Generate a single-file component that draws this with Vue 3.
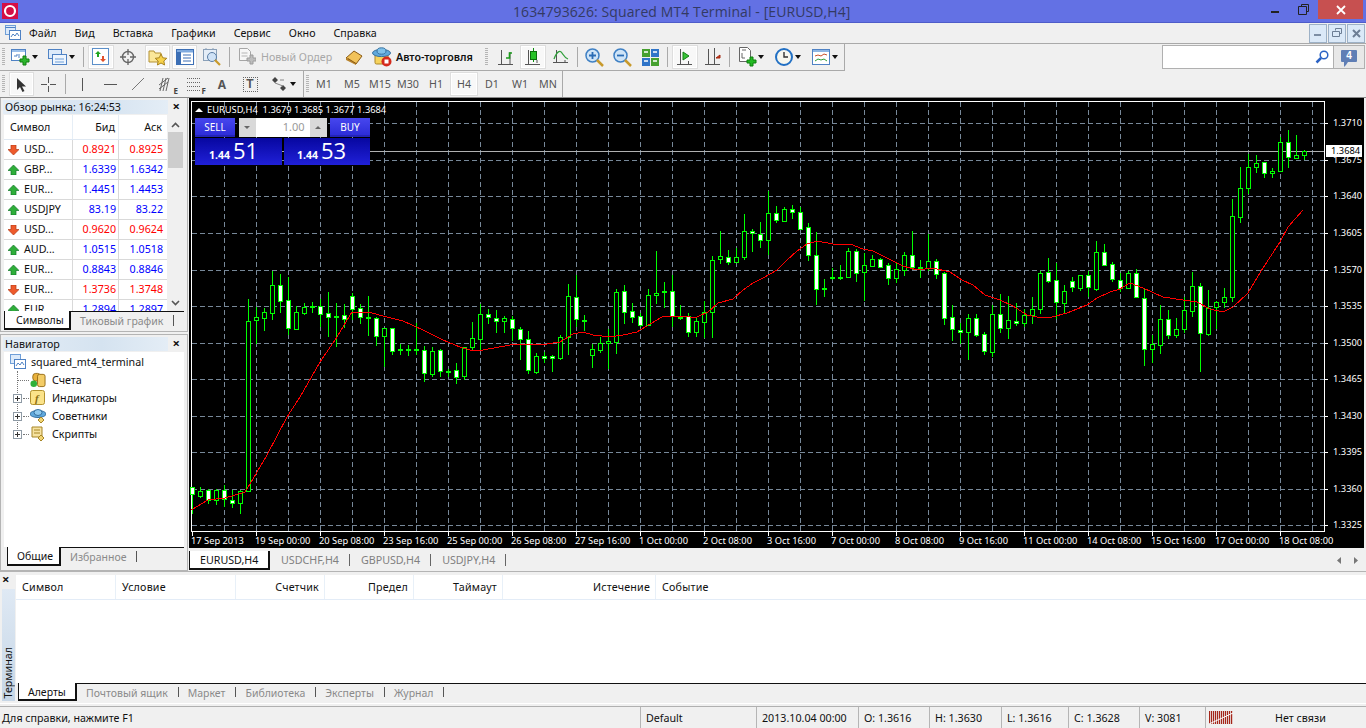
<script setup>
const raw = `487,487,494,513,1|487,491,496,497,0|489,490,500,503,1|489,490,500,504,0|485,490,499,506,1|490,500,503,507,1|490,491,503,513,0|299,321,491,491,0|307,317,320,343,0|308,312,318,330,0|271,285,313,319,0|274,285,301,312,1|277,300,328,334,1|306,312,329,329,0|303,307,313,314,0|302,306,307,312,1|299,306,314,326,1|292,313,317,336,1|303,316,317,346,1|304,315,319,327,1|293,296,309,319,1|304,308,317,323,1|296,317,318,335,1|317,318,336,345,1|328,328,336,366,0|328,328,351,354,1|344,349,350,354,1|345,349,350,355,1|323,349,350,354,1|346,350,373,381,1|347,351,374,376,0|349,350,371,376,1|369,371,372,376,1|363,370,377,383,1|347,347,376,379,0|322,338,347,350,0|304,314,339,350,0|309,314,317,323,1|310,318,321,332,1|316,318,321,332,0|316,319,328,340,1|327,329,339,359,1|331,339,370,373,1|353,356,372,373,0|352,356,358,362,1|355,356,358,371,1|335,337,358,359,0|284,296,337,354,0|275,297,319,326,1|315,320,321,330,1|344,349,355,367,0|337,343,350,352,0|329,341,343,368,0|289,292,342,353,0|285,291,312,323,1|303,311,317,322,1|313,316,325,326,1|289,295,325,325,0|251,293,295,303,0|282,291,292,307,1|275,291,316,326,1|305,317,318,319,1|313,316,332,336,1|318,321,332,336,0|301,312,322,337,0|256,260,312,337,0|231,256,259,263,0|250,257,262,264,1|248,257,262,262,0|214,231,257,259,0|229,231,233,251,1|222,234,240,247,1|191,213,240,254,0|206,213,220,222,1|207,209,221,221,0|205,209,212,218,1|207,212,229,229,1|223,227,255,260,1|232,255,289,304,1|279,288,289,296,1|268,277,278,279,1|265,277,278,279,1|248,251,277,277,0|249,251,273,281,1|253,265,272,300,0|255,259,266,266,0|258,259,267,267,1|263,265,278,284,1|263,269,278,282,0|252,255,270,275,0|231,255,267,269,1|260,267,268,277,1|234,261,268,270,0|259,261,274,278,1|272,273,318,324,1|305,317,329,340,1|323,330,332,343,1|314,318,332,359,0|314,318,335,336,1|332,334,351,354,1|305,314,352,356,0|294,314,328,332,1|296,320,328,338,0|303,321,323,325,1|309,315,323,326,0|297,309,315,323,0|271,273,309,313,0|258,272,281,282,1|263,280,302,318,1|285,291,303,313,0|277,281,287,291,1|275,275,288,290,0|271,275,287,296,1|241,252,289,290,0|244,252,265,265,1|262,264,279,281,1|273,280,288,291,1|271,273,288,288,0|269,273,297,297,1|289,298,349,365,1|335,344,349,362,0|305,319,345,353,0|310,319,335,338,1|318,329,335,337,0|297,310,329,332,0|272,286,311,316,0|283,286,333,371,1|290,308,334,335,0|301,302,307,328,0|288,297,302,307,0|199,216,297,301,0|167,188,217,222,0|154,167,188,193,0|155,163,167,172,0|162,162,173,177,1|168,171,173,177,0|137,142,171,171,0|130,142,157,167,1|135,155,158,158,0|150,151,155,159,0`
const candles = raw.split('|').map((r, i) => {
  const [hi, top, bot, lo, w] = r.split(',').map(Number)
  return { x: 192 + 8 * i, hi, top, bot, lo, w }
})
const maPoints = `191,510 208,500 225,498 245,492 250,484 267,455 287,417 300,397 320,362 337,337 352,312 368,312 387,317 403,321 423,330 443,340 460,347 470,350 483,350 510,345 527,344 547,344 560,342 573,334 583,332 593,335 610,337 623,335 637,332 650,324 662,317 677,316 690,317 697,317 708,312 718,303 733,299 743,290 753,283 763,278 777,270 787,260 797,251 807,244 817,241 833,244 850,244 863,249 873,251 887,258 903,266 917,270 933,268 950,272 962,280 973,285 985,295 1000,300 1013,306 1027,315 1037,317 1052,317 1067,313 1087,305 1097,298 1110,292 1120,289 1130,283 1143,288 1163,297 1183,300 1197,302 1210,309 1223,312 1233,307 1248,293 1263,268 1280,242 1288,227 1303,210`
const hLines = [123, 160, 196, 233, 270, 306, 343, 379, 416, 452, 489, 525]
const vLines = Array.from({ length: 35 }, (_, i) => 224 + 32 * i)
const prices = ['1.3710', '1.3675', '1.3640', '1.3605', '1.3570', '1.3535', '1.3500', '1.3465', '1.3430', '1.3395', '1.3360', '1.3325']
const times = ['17 Sep 2013', '19 Sep 00:00', '20 Sep 08:00', '23 Sep 16:00', '25 Sep 00:00', '26 Sep 08:00', '27 Sep 16:00', '1 Oct 00:00', '2 Oct 08:00', '3 Oct 16:00', '7 Oct 00:00', '8 Oct 08:00', '9 Oct 16:00', '11 Oct 00:00', '14 Oct 08:00', '15 Oct 16:00', '17 Oct 00:00', '18 Oct 08:00']
const menu = ['Файл', 'Вид', 'Вставка', 'Графики', 'Сервис', 'Окно', 'Справка']
const periods = ['M1', 'M5', 'M15', 'M30', 'H1', 'H4', 'D1', 'W1', 'MN']
const quotes = [
  ['USD...', '0.8921', '0.8925', 0], ['GBP...', '1.6339', '1.6342', 1], ['EUR...', '1.4451', '1.4453', 1],
  ['USDJPY', '83.19', '83.22', 1], ['USD...', '0.9620', '0.9624', 0], ['AUD...', '1.0515', '1.0518', 1],
  ['EUR...', '0.8843', '0.8846', 1], ['EUR...', '1.3736', '1.3748', 0], ['EUR...', '1.2894', '1.2897', 1]
]
const chartTabs = ['USDCHF,H4', 'GBPUSD,H4', 'USDJPY,H4']
const termTabs = ['Почтовый ящик', 'Маркет', 'Библиотека', 'Эксперты', 'Журнал']
const statusCells = [
  { t: '2013.10.04 00:00', w: 102 }, { t: 'O: 1.3616', w: 71 }, { t: 'H: 1.3630', w: 72 },
  { t: 'L: 1.3616', w: 67 }, { t: 'C: 1.3628', w: 71 }, { t: 'V: 3081', w: 66 }
]
const barsX = Array.from({ length: 12 }, (_, i) => i * 2)
</script>

<template>
  <div class="app">
    <header class="title">
      <svg class="logo" width="16" height="16" viewBox="0 0 16 16"><rect width="16" height="16" fill="#d40f45"/><circle cx="8" cy="8" r="5" fill="none" stroke="#fff" stroke-width="2.2"/></svg>
      <span class="title-text">1634793626: Squared MT4 Terminal - [EURUSD,H4]</span>
      <div class="win">
        <svg class="wmin" width="10" height="3"><rect width="8" height="2" y="1" fill="#222"/></svg>
        <svg class="wmax" width="11" height="11"><path d="M3.5 2.5V.5h7v7h-2M.5 2.5h8v8h-8z" fill="none" stroke="#222"/></svg>
        <div class="wclose"><svg width="10" height="10"><path d="M1 1l8 8M9 1l-8 8" stroke="#fff" stroke-width="1.8"/></svg></div>
      </div>
    </header>

    <nav class="menubar">
      <svg class="mdi-ico" width="16" height="16" viewBox="0 0 16 16"><rect x=".5" y=".5" width="10" height="9" fill="#dceafa" stroke="#6f9fd8"/><rect x="4.5" y="5.5" width="11" height="9" fill="#fff" stroke="#4f82c4"/><path d="M6 12l2-3 2 2 2-3 2 3" fill="none" stroke="#4f82c4"/><path d="M.5 2.5h10" stroke="#4f82c4"/></svg>
      <span v-for="m in menu" :key="m" class="menu-item">{{ m }}</span>
      <div class="mdi-btns">
        <span class="mdi-btn"><svg width="8" height="8"><rect y="5" width="7" height="2" fill="#7d8ea5"/></svg></span>
        <span class="mdi-btn"><svg width="10" height="10"><path d="M3.5 2.5V.5h6v5h-2M.5 3.5h7v5h-7z" fill="none" stroke="#6d7e95" stroke-width="1"/></svg></span>
        <span class="mdi-btn"><svg width="9" height="9"><path d="M1 1l7 7M8 1l-7 7" stroke="#6d7e95" stroke-width="2"/></svg></span>
      </div>
    </nav>

    <div class="row1">
      <div class="toolbar tb1">
        <i class="grip"></i>
        <span class="tbtn w-m">
          <svg width="20" height="18" viewBox="0 0 20 18"><rect x=".5" y="1.5" width="14" height="11" fill="#fff" stroke="#4f82c4"/><rect x="1" y="2" width="13" height="2" fill="#9cc0ea"/><path d="M3 8h3v-2M8 10V6" stroke="#4f82c4" fill="none"/><path d="M10 8h3v-3h3v3h3v3h-3v3h-3v-3h-3z" transform="translate(-1 3)" fill="#2cb52c" stroke="#0e7f0e"/></svg>
          <i class="caret"></i>
        </span>
        <span class="tbtn w-m">
          <svg width="20" height="18" viewBox="0 0 20 18"><rect x=".5" y="1.5" width="13" height="9" fill="#dceafa" stroke="#4f82c4"/><rect x="4.5" y="6.5" width="14" height="10" fill="#eef5fd" stroke="#4f82c4"/><path d="M7 11h9M7 14h9" stroke="#6f9fd8"/></svg>
          <i class="caret"></i>
        </span>
        <i class="sep s-b"></i>
        <span class="tbtn on w-26">
          <svg width="18" height="18" viewBox="0 0 18 18"><rect x=".5" y=".5" width="16" height="16" fill="#fff" stroke="#5b8fc9"/><path d="M3 6l3-3 3 3H7v3H5V6z" fill="#1fa51f"/><path d="M8 11l3 3 3-3h-2V8h-2v3z" fill="#e1502a"/></svg>
        </span>
        <span class="tbtn w-28">
          <svg width="18" height="18" viewBox="0 0 18 18"><circle cx="9" cy="9" r="5.5" fill="none" stroke="#666" stroke-width="1.4"/><path d="M9 1v6M9 11v6M1 9h6M11 9h6" stroke="#666" stroke-width="1.3"/></svg>
        </span>
        <span class="tbtn on w-25 ml3">
          <svg width="20" height="18" viewBox="0 0 20 18"><path d="M1 3h5l1 2h6v9H1z" fill="#fbe79a" stroke="#b39133"/><path d="M13 6l1.8 3.8 4 .5-3 2.7.8 4-3.6-2-3.6 2 .8-4-3-2.7 4-.5z" fill="#f7d24b" stroke="#a98420"/></svg>
        </span>
        <span class="tbtn on w-25 ml2">
          <svg width="18" height="17" viewBox="0 0 18 17"><rect x=".5" y=".5" width="17" height="15" fill="#fff" stroke="#3c6fb5"/><rect x="1" y="1" width="16" height="2.5" fill="#7faadf"/><rect x="1" y="3" width="4" height="12" fill="#3c6fb5"/><path d="M7 6h8M7 9h8M7 12h8" stroke="#3c6fb5"/></svg>
        </span>
        <span class="tbtn w-28 ml1">
          <svg width="19" height="19" viewBox="0 0 19 19"><rect x=".5" y="1.5" width="13" height="11" fill="#e4edf7" stroke="#8aa0b8"/><path d="M3 1V0M10 1V0" stroke="#8aa0b8"/><circle cx="9" cy="9" r="4.5" fill="#cfe2f6" stroke="#5a7ea6"/><path d="M12 12l5 5" stroke="#c89a2c" stroke-width="2.2"/></svg>
        </span>
        <i class="sep"></i>
        <span class="tbtn w-28">
          <svg width="17" height="18" viewBox="0 0 17 18"><path d="M.5 .5h8l3 3v9h-11z" fill="#f7f7f7" stroke="#a6a6a6"/><path d="M2.5 5h6M2.5 8h6" stroke="#b5b5b5"/><path d="M8 10h3V7h3v3h3v3h-3v3h-3v-3H8z" fill="#bdbdbd" stroke="#9c9c9c"/></svg>
        </span>
        <span class="label gray">Новый Ордер</span>
        <span class="tbtn w-28">
          <svg width="18" height="15" viewBox="0 0 18 15"><path d="M1 8l8-7 8 5-6 8z" fill="#f1c25a" stroke="#8a5a14"/><path d="M3 8.5l8 5" stroke="#8a5a14"/><path d="M1 8l10 6v1L1 10z" fill="#b9832a"/></svg>
        </span>
        <span class="tbtn w-28">
          <svg width="20" height="20" viewBox="0 0 20 20"><rect x="3" y="7" width="13" height="10" rx="1.5" fill="#f6d35d" stroke="#a9852a"/><ellipse cx="9.5" cy="6" rx="9" ry="3.6" fill="#5fa9dd" stroke="#37719f"/><ellipse cx="9.5" cy="4" rx="4.5" ry="3.2" fill="#7ec0ea" stroke="#37719f"/><circle cx="14.5" cy="14.5" r="5" fill="#d42a1c"/><rect x="12.5" y="12.5" width="4" height="4" fill="#fff"/></svg>
        </span>
        <span class="label bold">Авто-торговля</span>
      </div>
      <div class="toolbar tb1b">
        <i class="grip"></i>
        <span class="tbtn w-28">
          <svg width="16" height="19" viewBox="0 0 16 19"><path d="M3.500 2v14M0 16.500h15M12 4v12" stroke="#555" fill="none"/><path d="M8 10h3.500V5H14" stroke="#1a9a1a" stroke-width="1.600" fill="none"/></svg>
        </span>
        <span class="tbtn on w-26">
          <svg width="16" height="19" viewBox="0 0 16 19"><path d="M3.500 2v14M0 16.500h15M12 12v3" stroke="#555" fill="none"/><path d="M8.500 0v14" stroke="#0d8f0d"/><rect x="5.500" y="3.500" width="6" height="8" fill="#26c226" stroke="#0b6f0b"/></svg>
        </span>
        <span class="tbtn w-29">
          <svg width="16" height="18" viewBox="0 0 16 18"><path d="M3.500 2v12M0 14.500h15M12 12v2" stroke="#555" fill="none"/><path d="M1 11C4 3 7 2 9 5s3 5 6 6" stroke="#2f9f3a" stroke-width="1.300" fill="none"/></svg>
        </span>
        <i class="sep s-c"></i>
        <span class="tbtn w-28">
          <svg width="19" height="19" viewBox="0 0 19 19"><circle cx="7.500" cy="7.500" r="6.500" fill="#cfe4f7" stroke="#3f80c4" stroke-width="1.500"/><path d="M4 7.500h7M7.500 4v7" stroke="#2a6cb5" stroke-width="1.800"/><path d="M12 12l6 6" stroke="#c89a2c" stroke-width="2.500"/></svg>
        </span>
        <span class="tbtn w-28">
          <svg width="19" height="19" viewBox="0 0 19 19"><circle cx="7.500" cy="7.500" r="6.500" fill="#cfe4f7" stroke="#3f80c4" stroke-width="1.500"/><path d="M4 7.500h7" stroke="#2a6cb5" stroke-width="1.800"/><path d="M12 12l6 6" stroke="#c89a2c" stroke-width="2.500"/></svg>
        </span>
        <span class="tbtn w-28">
          <svg width="17" height="17" viewBox="0 0 17 17"><rect width="8" height="8" fill="#46a02f"/><rect x="9" width="8" height="8" fill="#2f74c8"/><rect y="9" width="8" height="8" fill="#2f74c8"/><rect x="9" y="9" width="8" height="8" fill="#46a02f"/><path d="M2 3h4M11 3h4M2 12h4M11 12h4" stroke="#fff" stroke-width="1.500"/></svg>
        </span>
        <i class="sep s-d"></i>
        <span class="tbtn on w-26">
          <svg width="16" height="19" viewBox="0 0 16 19"><path d="M3.500 1v15M0 16.500h15M11.500 13v3" stroke="#555" fill="none"/><path d="M6 4v8l6-4z" fill="#36c236" stroke="#128212"/></svg>
        </span>
        <span class="tbtn w-29">
          <svg width="16" height="19" viewBox="0 0 16 19"><path d="M3.500 1v15M0 16.500h15M9.500 0v16" stroke="#555" fill="none"/><path d="M15 7l-4 3 4 0z" fill="#c9381c" stroke="#a32a12"/></svg>
        </span>
        <i class="sep s-e"></i>
        <span class="tbtn w-m2">
          <svg width="18" height="20" viewBox="0 0 18 20"><path d="M.5 .5h8l3 3v11h-11z" fill="#fff" stroke="#666"/><path d="M3 6v5h3M3 3h4" stroke="#666" fill="none"/><path d="M8 10h3V7h3v3h3v3h-3v3h-3v-3H8z" transform="translate(0 3)" fill="#22b922" stroke="#0c7f0c"/></svg>
          <i class="caret"></i>
        </span>
        <span class="tbtn w-m3">
          <svg width="18" height="18" viewBox="0 0 18 18"><circle cx="9" cy="9" r="8" fill="#f7f7ef" stroke="#2270c4" stroke-width="2"/><path d="M9 4v5h4" stroke="#333" stroke-width="1.400" fill="none"/></svg>
          <i class="caret"></i>
        </span>
        <span class="tbtn w-m3">
          <svg width="18" height="16" viewBox="0 0 18 16"><rect x=".5" y=".5" width="17" height="15" fill="#fff" stroke="#4f82c4"/><rect x="1" y="1" width="16" height="2" fill="#8db6e4"/><path d="M3 7l3-1 3 1 3-2 3 1" stroke="#c9512a" fill="none"/><path d="M3 12l3-2 3 1 3-1 3 2" stroke="#2f9f3a" fill="none"/></svg>
          <i class="caret"></i>
        </span>
      </div>
      <div class="search">
        <div class="search-box">
          <svg width="14" height="14" viewBox="0 0 14 14"><circle cx="9" cy="5" r="3.800" fill="#fff" stroke="#2b62c4" stroke-width="1.500"/><path d="M6 8l-4.500 4.500" stroke="#2b62c4" stroke-width="2.500"/></svg>
        </div>
        <div class="notice"><span class="bubble">4</span></div>
      </div>
    </div>

    <div class="row2">
      <div class="toolbar tb2">
        <i class="grip"></i>
        <span class="tbtn on w-25">
          <svg width="11" height="15" viewBox="0 0 11 15"><path d="M1 1v12l3-3 2.500 5 2-1-2.500-4.500h4z" fill="#333"/></svg>
        </span>
        <span class="tbtn w-28">
          <svg width="17" height="17" viewBox="0 0 17 17"><path d="M8.500 1v6M8.500 10v6M1 8.500h6M10 8.500h6" stroke="#555"/></svg>
        </span>
        <i class="sep s-f"></i>
        <span class="tbtn w-28"><svg width="3" height="13"><path d="M1.500 0v13" stroke="#555"/></svg></span>
        <span class="tbtn w-28"><svg width="13" height="3"><path d="M0 1.500h13" stroke="#555"/></svg></span>
        <span class="tbtn w-28"><svg width="14" height="14"><path d="M1 13L13 1" stroke="#777"/></svg></span>
        <span class="tbtn w-28">
          <svg width="14" height="15" viewBox="0 0 14 15"><path d="M0 8L9 1M0 12l9-7M4 1L1 14M7 1L4 14M10 1L7 14" stroke="#666" fill="none"/></svg><b class="sub">E</b>
        </span>
        <span class="tbtn w-28">
          <svg width="14" height="14" viewBox="0 0 14 14"><path d="M0 1.500h14M0 5.500h14M0 9.500h14M0 13.500h14" stroke="#666" stroke-dasharray="1 1"/></svg><b class="sub">F</b>
        </span>
        <span class="tbtn w-28 ta">A</span>
        <span class="tbtn w-28"><span class="tt">T</span></span>
        <span class="tbtn w-m4">
          <svg width="15" height="14" viewBox="0 0 15 14"><path d="M3 0l3 3-3 3-3-3zM11 8l3 3-3 3-3-3z" fill="#444"/><path d="M3 6l8 3M8 3h4" stroke="#888"/></svg>
          <i class="caret"></i>
        </span>
      </div>
      <div class="toolbar tb2b">
        <i class="grip"></i>
        <span v-for="p in periods" :key="p" class="period" :class="{ active: p === 'H4' }">{{ p }}</span>
      </div>
    </div>

    <div class="main">
      <aside class="side">
        <section class="panel market">
          <div class="phead"><span>Обзор рынка: 16:24:53</span><span class="x">×</span></div>
          <div class="mbody">
            <div class="mtable">
              <div class="mrow mh">
                <span class="c1">Символ</span><span class="c2">Бид</span><span class="c3">Аск</span>
              </div>
              <div v-for="(q, i) in quotes" :key="i" class="mrow" :class="q[3] ? 'up' : 'down'">
                <span class="c1">
                  <svg width="11" height="10" viewBox="0 0 11 10">
                    <path v-if="q[3]" d="M5.500 0L11 5.500H8V10H3V5.500H0z" fill="#2fae3a" stroke="#13772a" stroke-width=".7"/>
                    <path v-else d="M5.500 10L11 4.500H8V0H3v4.500H0z" fill="#ee5a2c" stroke="#b13a15" stroke-width=".7"/>
                  </svg>
                  <em>{{ q[0] }}</em>
                </span>
                <span class="c2">{{ q[1] }}</span>
                <span class="c3">{{ q[2] }}</span>
              </div>
            </div>
            <div class="scroll">
              <svg width="9" height="6"><path d="M1 5l3.500-3.500L8 5" fill="none" stroke="#555" stroke-width="1.600"/></svg>
              <i class="thumb"></i>
              <svg class="sdown" width="9" height="6"><path d="M1 1l3.500 3.500L8 1" fill="none" stroke="#555" stroke-width="1.600"/></svg>
            </div>
          </div>
          <div class="tabs mtabs">
            <span class="tab active">Символы</span>
            <span class="tab">Тиковый график</span>
          </div>
        </section>

        <section class="panel nav">
          <div class="phead"><span>Навигатор</span><span class="x">×</span></div>
          <div class="tree">
            <i class="vdots"></i>
            <div class="node root">
              <svg width="16" height="16" viewBox="0 0 16 16"><rect x=".5" y=".5" width="10" height="9" fill="#dceafa" stroke="#6f9fd8"/><rect x="4.500" y="5.500" width="11" height="9" fill="#fff" stroke="#4f82c4"/><path d="M6 12l2-3 2 2 2-3 2 3" fill="none" stroke="#4f82c4"/></svg>
              <span>squared_mt4_terminal</span>
            </div>
            <div class="node"><i class="hd"></i>
              <svg width="16" height="16" viewBox="0 0 17 16"><rect x="3" y="1" width="8" height="8" rx="3" fill="#e9b13c" stroke="#966d18"/><rect x="8" y="2" width="8" height="13" rx="2" fill="#f3cc66" stroke="#966d18"/><circle cx="4" cy="12" r="3.500" fill="#2fb03a"/></svg>
              <span>Счета</span>
            </div>
            <div class="node"><i class="plus"></i><i class="hd short"></i>
              <svg width="16" height="16" viewBox="0 0 16 16"><rect x=".5" y=".5" width="14" height="14" rx="2" fill="#fbe38a" stroke="#b3922f"/><text x="5" y="12" class="fx">f</text></svg>
              <span>Индикаторы</span>
            </div>
            <div class="node"><i class="plus"></i><i class="hd short"></i>
              <svg width="16" height="16" viewBox="0 0 16 16"><ellipse cx="8" cy="6" rx="8" ry="3.500" fill="#5fa9dd" stroke="#37719f"/><ellipse cx="8" cy="4.500" rx="4" ry="3" fill="#8fcaee" stroke="#37719f"/><path d="M11 9l3 3-3 3-3-3z" fill="#f1d473" stroke="#a68526"/></svg>
              <span>Советники</span>
            </div>
            <div class="node"><i class="plus"></i><i class="hd short"></i>
              <svg width="16" height="16" viewBox="0 0 16 16"><path d="M2 1h10v10H2z" fill="#f6e2a0" stroke="#a68526"/><path d="M4 4h6M4 7h6" stroke="#a68526"/><path d="M11 9l3 3-3 3-3-3z" fill="#f1d473" stroke="#a68526"/></svg>
              <span>Скрипты</span>
            </div>
          </div>
          <div class="tabs ntabs">
            <span class="tab active">Общие</span>
            <span class="tab">Избранное</span>
          </div>
        </section>
      </aside>

      <div class="chartcol">
        <div class="chart">
          <svg class="plot" width="1175" height="450" viewBox="189 98 1175 450">
            <g shape-rendering="crispEdges">
              <rect x="189" y="98" width="1175" height="450" fill="#000"/>
              <path d="M191.500 101.500H1324.500V531.500H191.500Z" fill="none" stroke="#fff"/>
              <g stroke="#778899" stroke-dasharray="5 3">
                <path v-for="y in hLines" :key="y" :d="`M192 ${y + .5}H1324`"/>
                <path v-for="x in vLines" :key="x" :d="`M${x + .5} 102V531`"/>
              </g>
              <path d="M192 151.500H1324" stroke="#b0b0b0"/>
              <g>
                <g v-for="c in candles" :key="c.x">
                  <path :d="`M${c.x + .5} ${c.hi}V${c.lo + 1}`" stroke="#00ff00"/>
                  <rect :x="c.x - 1.500" :y="c.top + .5" width="4" :height="c.bot - c.top" :fill="c.w ? '#fff' : '#000'" stroke="#00ff00"/>
                </g>
              </g>
              <polyline :points="maPoints" fill="none" stroke="#ff0000"/>
              <path v-for="y in hLines" :key="'p' + y" :d="`M1325 ${y + .5}h3`" stroke="#fff"/>
              <path v-for="(t, i) in times" :key="'t' + i" :d="`M${192.5 + i * 64} 532v4`" stroke="#fff"/>
              <rect x="1326" y="145" width="36" height="12" fill="#fff"/>
            </g>
            <g class="axis">
              <text v-for="(p, i) in prices" :key="p" x="1333" :y="hLines[i] + 3">{{ p }}</text>
              <text v-for="(t, i) in times" :key="t" :x="191 + i * 64" y="544">{{ t }}</text>
              <text x="1331" y="154" class="cur-p">1.3684</text>
              <text x="207" y="113">EURUSD,H4&nbsp;&nbsp;1.3679 1.3685 1.3677 1.3684</text>
            </g>
            <path d="M195 112l4-4 4 4z" fill="#fff"/>
          </svg>
          <div class="trade">
            <div class="trade-top">
              <span class="tbutton">SELL</span>
              <div class="lot">
                <span class="spin"><i class="dn"></i></span>
                <span class="lotv">1.00</span>
                <span class="spin"><i class="upw"></i></span>
              </div>
              <span class="tbutton">BUY</span>
            </div>
            <div class="trade-bot">
              <div class="pbox"><b>1.44</b><span>51</span></div>
              <div class="pbox r"><b>1.44</b><span>53</span></div>
            </div>
          </div>
        </div>
        <div class="ctabs">
          <span class="ctab active">EURUSD,H4</span>
          <span v-for="t in chartTabs" :key="t" class="ctab">{{ t }}</span>
          <span class="ctab-arrows">
            <svg width="5" height="7"><path d="M4 0v7L0 3.500z" fill="#777"/></svg>
            <svg width="5" height="7"><path d="M1 0v7l4-3.500z" fill="#777"/></svg>
          </span>
        </div>
      </div>
    </div>

    <section class="terminal">
      <div class="strip"><span class="x">×</span><div class="vbar"><span>Терминал</span></div></div>
      <div class="tbody">
        <div class="thead">
          <span class="th t1">Символ</span>
          <span class="th t2">Условие</span>
          <span class="th t3">Счетчик</span>
          <span class="th t4">Предел</span>
          <span class="th t5">Таймаут</span>
          <span class="th t6">Истечение</span>
          <span class="th t7">Событие</span>
        </div>
        <div class="tblank"></div>
        <div class="tabs ttabs">
          <span class="tab active">Алерты</span>
          <span v-for="t in termTabs" :key="t" class="tab">{{ t }}</span>
        </div>
      </div>
    </section>

    <footer class="status">
      <span class="s-help">Для справки, нажмите F1</span>
      <span class="s-cell s-def">Default</span>
      <span v-for="s in statusCells" :key="s.t" class="s-cell" :style="{ width: s.w + 'px' }">{{ s.t }}</span>
      <span class="s-bars">
        <svg width="24" height="13"><rect v-for="x in barsX" :key="x" :x="x" y="0" width="1.200" height="13" fill="#a4261a"/><path d="M0 13L24 2" stroke="#fff" stroke-width="1"/></svg>
      </span>
      <span class="s-net">Нет связи</span>
    </footer>
  </div>
</template>

<style>
html, body { margin: 0; overflow: hidden; background: #f0f0f0; }
</style>

<style scoped>
.app {
  width: 1366px; height: 728px; display: flex; flex-direction: column; overflow: hidden;
  background: #f0f0f0; color: #111; font: 10.7px "Noto Sans", "DejaVu Sans", sans-serif;
}
i, em, b { font-style: normal; }
.title {
  height: 22px; flex: none; background: #6371e4; border-bottom: 1px solid #4e5cc9;
  display: flex; align-items: flex-start; position: relative;
}
.logo { margin: 3px 0 0 2px; }
.title-text {
  position: absolute; left: 513px; top: 1px; color: #333a63; letter-spacing: .1px;
  font: 14px/21px "Open Sans", sans-serif; white-space: nowrap;
}
.win { margin-left: auto; display: flex; align-items: flex-start; }
.wmin { margin: 10px 17px 0 0; }
.wmax { margin: 4px 9px 0 0; }
.wclose { width: 45px; height: 19px; background: #c75050; display: flex; align-items: center; justify-content: center; margin-right: 3px; }
.menubar { height: 20px; flex: none; display: flex; align-items: center; border-bottom: 1px solid #a9a9a9; }
.mdi-ico { margin: 0 8px 0 5px; }
.menu-item { margin-right: 18px; }
.mdi-btns { margin-left: auto; display: flex; gap: 1px; margin-right: 1px; }
.mdi-btn {
  width: 16px; height: 17px; border: 1px solid #9db1c6; background: #dbe9f8;
  display: flex; align-items: center; justify-content: center;
}
.row1 { height: 27px; flex: none; display: flex; }
.row2 { height: 27px; flex: none; display: flex; border-bottom: 1px solid #8a8a8a; box-sizing: border-box; }
.toolbar { display: flex; align-items: center; height: 100%; box-sizing: border-box; }
.tb1 { width: 483px; border-bottom: 1px solid #a9a9a9; }
.tb1b { border-right: 1px solid #a9a9a9; border-bottom: 1px solid #a9a9a9; width: 362px; }
.tb2 { width: 304px; border-right: 1px solid #a9a9a9; }
.tb2b { width: 259px; border-right: 1px solid #a9a9a9; }
.tb2b .grip { margin-right: 1px; }
.grip {
  width: 3px; height: 18px; margin: 0 4px 0 2px; flex: none;
  background: repeating-linear-gradient(#b5b5b5 0 1px, transparent 1px 2px);
}
.tbtn { height: 24px; display: flex; align-items: center; justify-content: center; box-sizing: border-box; flex: none; position: relative; }
.w-25 { width: 25px; }
.w-26 { width: 26px; }
.w-28 { width: 28px; }
.w-29 { width: 29px; }
.ml1 { margin-left: 1px; }
.ml2 { margin-left: 2px; }
.ml3 { margin-left: 3px; }
.w-m { width: 37px; justify-content: flex-start; padding-left: 2px; gap: 1px; }
.w-m2 { width: 37px; justify-content: flex-start; padding-left: 6px; gap: 1px; }
.w-m3 { width: 37px; justify-content: flex-start; padding-left: 5px; gap: 2px; }
.w-m4 { width: 39px; justify-content: flex-start; padding-left: 8px; gap: 3px; }
.on { background: #f8f8f8; border: 1px solid #dedede; box-shadow: inset 0 0 0 1px #fff; }
.caret { width: 0; height: 0; border: 3px solid transparent; border-top: 4px solid #111; border-bottom: 0; }
.sep { width: 1px; height: 20px; background: #aaa; margin: 0 3px; flex: none; }
.s-b { margin: 0 4px 0 0; }
.s-c { margin: 0 2px; }
.s-d { margin: 0 4px 0 3px; }
.s-e { margin: 0 3px 0 2px; }
.s-f { margin: 0 2px 0 3px; }
.label { white-space: nowrap; }
.gray { color: #a8a8a8; width: 79px; flex: none; }
.bold { font-weight: 600; color: #111; }
.sub { position: absolute; right: 2px; bottom: 1px; font-size: 8px; color: #444; line-height: 9px; }
.ta { color: #555; font-weight: 700; font-size: 12px; }
.tt { border: 1px dotted #666; width: 13px; height: 13px; text-align: center; font: 700 12px/13px "Liberation Sans", sans-serif; color: #555; }
.period { width: 28px; height: 24px; line-height: 24px; text-align: center; color: #555; flex: none; box-sizing: border-box; }
.period.active { background: #f8f8f8; border: 1px solid #dedede; box-shadow: inset 0 0 0 1px #fff; line-height: 22px; }
.search { display: flex; height: 24px; margin: 1px 1px 0 auto; }
.search-box {
  width: 166px; border: 1px solid #b0b0b0; background: #fff; display: flex; align-items: center;
  justify-content: flex-end; padding-right: 4px; height: 22px;
}
.notice {
  width: 30px; height: 22px; border: 1px solid #b0b0b0; border-left: 0; background: #e8e8e8;
  display: flex; align-items: center; justify-content: center;
}
.bubble {
  width: 16px; height: 12px; background: #5f7eb5; color: #fff; font: 700 10px/12px "Liberation Sans", sans-serif;
  text-align: center; border-radius: 1px; position: relative; margin-top: -3px;
}
.bubble::after { content: ""; position: absolute; left: 3px; top: 12px; border: 2px solid transparent; border-top: 3px solid #5f7eb5; border-left: 2px solid #5f7eb5; }
.main { height: 473px; flex: none; display: flex; }
.side { width: 188px; flex: none; display: flex; flex-direction: column; }
.panel { box-sizing: border-box; border: 1px solid #b4b4b4; border-top: 0; display: flex; flex-direction: column; padding: 0 3px; background: #f0f0f0; }
.market { height: 234px; padding-bottom: 2px; }
.nav { height: 237px; margin-top: 2px; padding-bottom: 4px; border-top: 1px solid #b4b4b4; }
.phead {
  height: 14px; flex: none; display: flex; align-items: center; justify-content: space-between;
  line-height: 13px; padding-left: 2px; position: relative; margin-top: 2px;
  background: linear-gradient(90deg, #e4edf6, #d5e3f0 60%, #e4edf6 100%);
  margin-right: 16px; margin-left: -1px;
}
.x { position: absolute; font-weight: 700; font-size: 13px; line-height: 13px; color: #111; }
.phead .x { right: -12px; top: 0; }
.mbody { flex: none; height: 196px; display: flex; overflow: hidden; background: #fff; margin-top: 1px; }
.mtable { width: 163px; flex: none; }
.mrow { display: flex; height: 20px; box-sizing: border-box; border-bottom: 1px solid #d9d9d9; line-height: 19px; }
.mh { height: 25px; line-height: 24px; border-bottom: 1px solid #dfe8f2; }
.c1 { width: 69px; flex: none; box-sizing: border-box; padding-left: 4px; border-right: 1px solid #d9d9d9; display: flex; align-items: center; gap: 5px; }
.c1 em { color: #111; }
.c2 { width: 46px; flex: none; box-sizing: border-box; text-align: right; padding-right: 2px; border-right: 1px solid #d9d9d9; }
.c3 { flex: 1; text-align: right; padding-right: 4px; }
.mh .c1 { padding-left: 6px; border-right-color: #e6eef6; }
.mh .c2 { padding-right: 3px; border-right-color: #e6eef6; color: #111; }
.mh .c3 { color: #111; padding-right: 5px; }
.up .c2, .up .c3 { color: #0000ff; }
.down .c2, .down .c3 { color: #ff0000; }
.scroll { flex: 1; background: #f0f0f0; display: flex; flex-direction: column; align-items: center; padding-top: 7px; box-sizing: border-box; }
.thumb { width: 15px; height: 36px; background: #cdcdcd; margin-top: 4px; flex: none; }
.sdown { margin-top: auto; margin-bottom: 5px; }
.tabs { display: flex; border-top: 1px solid #111; height: 19px; flex: none; box-sizing: border-box; align-items: stretch; }
.tab { padding: 0 11px 0 9px; color: #8a8a8a; line-height: 18px; white-space: nowrap; position: relative; font-size: 10.5px; }
.tab:not(.active)::after { content: ""; position: absolute; right: 0; top: 3px; bottom: 4px; width: 1px; background: #555; }
.tab.active {
  color: #111; background: #fff; padding: 0 0 0 11px; border: 1px solid #111; border-top: 0;
  border-right-width: 2px; border-bottom-width: 2px; margin-top: -1px; height: 19px; box-sizing: border-box;
}
.mtabs .tab.active { width: 67px; }
.ntabs { margin-left: 3px; }
.ntabs .tab.active { width: 54px; padding-left: 9px; }
.tree { flex: 1; background: #fff; position: relative; padding-top: 1px; margin-top: 1px; }
.vdots { position: absolute; left: 13px; top: 19px; height: 64px; border-left: 1px dotted #777; }
.node { height: 18px; display: flex; align-items: center; padding-left: 26px; position: relative; gap: 6px; }
.node.root { padding-left: 6px; gap: 5px; }
.plus {
  position: absolute; left: 9px; top: 5px; width: 7px; height: 7px; border: 1px solid #8e9aa5; background:
  linear-gradient(#333, #333) center/5px 1px no-repeat, linear-gradient(#333, #333) center/1px 5px no-repeat, #fff;
}
.hd { position: absolute; left: 14px; top: 9px; width: 11px; border-top: 1px dotted #777; }
.hd.short { left: 19px; width: 6px; }
.fx { font: italic 700 11px "Liberation Serif", serif; fill: #8a6d12; }
.chartcol { flex: 1; display: flex; flex-direction: column; min-width: 0; margin-left: 1px; }
.chart { height: 450px; flex: none; position: relative; }
.plot { display: block; }
.axis text { fill: #fff; font: 9.3px "Noto Sans", sans-serif; }
.axis .cur-p { fill: #000; }
.trade { position: absolute; left: 6px; top: 20px; width: 175px; }
.trade-top { display: flex; justify-content: space-between; height: 20px; }
.tbutton {
  width: 40px; height: 19px; background: linear-gradient(#4747ee, #2a2ad6); color: #fff; text-align: center;
  font: 10px/18px "Noto Sans", sans-serif; box-shadow: inset 0 -2px 0 #2424b8;
}
.lot { width: 88px; height: 19px; background: #d9d9d9; display: flex; }
.spin { width: 17px; display: flex; align-items: center; justify-content: center; }
.dn { border: 3px solid transparent; border-top: 3px solid #666; border-bottom: 0; }
.upw { border: 3px solid transparent; border-bottom: 3px solid #666; border-top: 0; }
.lotv { flex: 1; background: #fff; text-align: right; color: #999; padding-right: 5px; line-height: 18px; font-size: 11px; }
.trade-bot { display: flex; justify-content: space-between; }
.pbox {
  width: 87px; height: 27px; box-sizing: border-box; background: linear-gradient(#0707a0, #2020d8); color: #fff;
  display: flex; align-items: baseline; padding-left: 14px; gap: 3px;
}
.pbox.r { width: 86px; padding-left: 13px; }
.pbox b { font: 700 10.5px/27px "Noto Sans", sans-serif; }
.pbox span { font: 22px/25px "Open Sans", sans-serif; }
.ctabs { height: 23px; flex: none; display: flex; padding-top: 3px; box-sizing: border-box; color: #808080; }
.ctab { padding: 0 11px; line-height: 18px; position: relative; white-space: nowrap; }
.ctab:not(.active)::after { content: ""; position: absolute; right: 0; top: 3px; height: 12px; width: 1px; background: #666; }
.ctab.active {
  color: #111; background: #fff; border: 1px solid #111; border-top: 0; border-right-width: 2px;
  border-bottom-width: 2px; box-sizing: border-box; height: 19px; line-height: 18px; padding: 0 10px; width: 81px;
}
.ctab-arrows { margin-left: auto; display: flex; gap: 11px; margin-right: 8px; align-items: center; height: 18px; }
.terminal { height: 133px; flex: none; display: flex; border-top: 1px solid #b4b4b4; border-bottom: 1px solid #fff; box-sizing: border-box; padding-bottom: 2px; }
.strip { width: 16px; flex: none; position: relative; display: flex; flex-direction: column; padding-left: 2px; box-sizing: border-box; }
.strip .x { left: 2px; top: 1px; }
.vbar { margin-top: 17px; flex: 1; background: linear-gradient(#dfe9f4, #c6d6e6); width: 13px; position: relative; }
.vbar span { writing-mode: vertical-rl; transform: rotate(180deg); position: absolute; left: 0; bottom: 2px; line-height: 13px; }
.tbody { flex: 1; display: flex; flex-direction: column; padding-top: 3px; box-sizing: border-box; min-width: 0; }
.thead { height: 25px; flex: none; background: #fff; display: flex; line-height: 25px; border-bottom: 1px solid #e3ecf7; box-sizing: border-box; }
.th { box-sizing: border-box; border-right: 1px solid #e8f0f8; padding: 0 5px; flex: none; letter-spacing: .2px; }
.t1 { width: 100px; padding-left: 6px; }
.t2 { width: 120px; padding-left: 6px; }
.t3 { width: 89px; text-align: right; }
.t4 { width: 89px; text-align: right; }
.t5 { width: 89px; text-align: right; }
.t6 { width: 153px; text-align: right; }
.t7 { border: 0; padding-left: 6px; }
.tblank { flex: 1; background: #fff; }
.ttabs { height: 18px; margin-left: 2px; }
.ttabs .tab.active { height: 18px; width: 59px; padding-left: 9px; }
.ttabs .tab { line-height: 18px; }
.status { height: 22px; flex: none; margin-top: 2px; border-top: 1px solid #b0b0b0; display: flex; line-height: 23px; box-sizing: border-box; }
.s-help { width: 640px; padding-left: 2px; box-sizing: border-box; flex: none; }
.s-cell { box-sizing: border-box; border-left: 1px solid #b5b5b5; padding-left: 5px; flex: none; white-space: nowrap; }
.s-def { width: 116px; }
.s-bars { width: 70px; border-left: 1px solid #b5b5b5; padding-left: 3px; box-sizing: border-box; display: flex; align-items: center; flex: none; }
.s-net { flex: none; }
</style>
